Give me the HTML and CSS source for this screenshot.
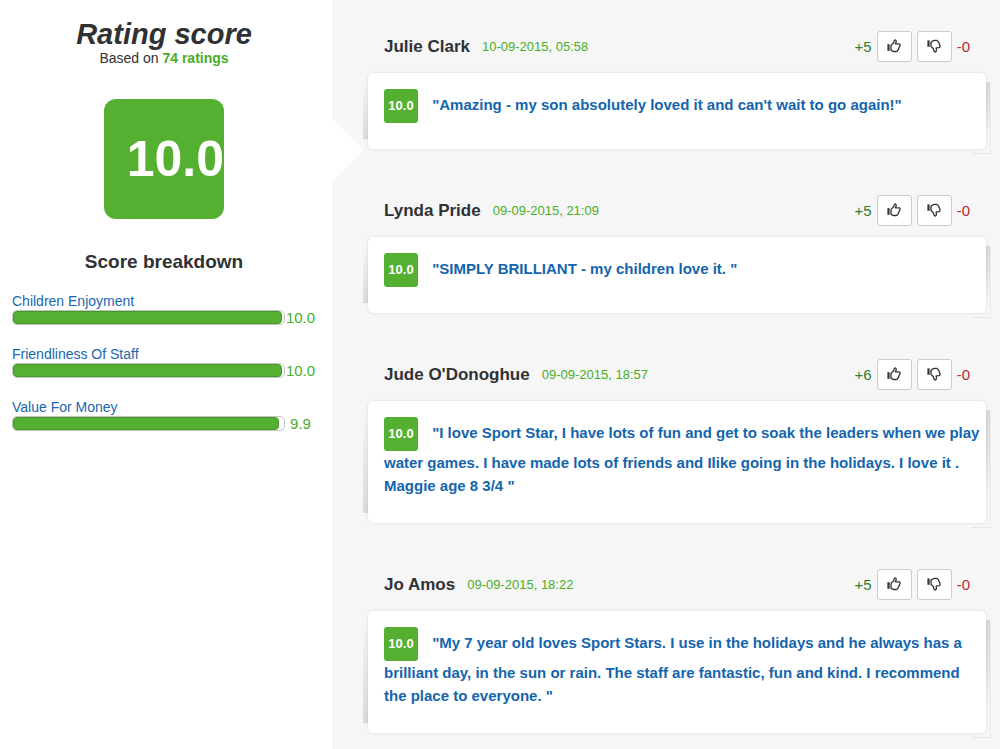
FILE: index.html
```html
<!DOCTYPE html>
<html lang="en">
<head>
    <meta charset="UTF-8">
    <meta name="viewport" content="width=device-width, initial-scale=1.0">
    <title>Rating score</title>
    <link rel="stylesheet" href="styles.css">
</head>

<body>
    <svg class="sprite" aria-hidden="true">
        <symbol id="thumb-up" viewBox="0 0 14 14">
            <path d="M0.4 5.2h2.2v6.6H0.4z" fill="currentColor"/>
            <path d="M4 6.4 6.6 3.8 7.4 1.4Q8 0.6 8.8 1.2 9.4 1.8 9.1 3L8.4 4.8H12.2Q13.4 5 13 6.3L12.2 8.6 11.2 10.8Q10.6 12.5 9.4 12.5H6.6Q5.4 12.4 4 11z" fill="none" stroke="currentColor" stroke-width="1.3" stroke-linejoin="round"/>
        </symbol>
        <symbol id="thumb-down" viewBox="0 0 14 14">
            <path d="M0.4 1.4h2.2v6.4H0.4z" fill="currentColor"/>
            <path d="M4 3.2Q6 1.3 7.6 1.3H9.6Q10.8 1.5 11.5 3L12.9 6.2Q13.4 8.4 12 8.6L9.2 8.8 9.4 11.2Q9.4 12.9 8.2 13 7.2 13 7 11.8L6.2 9.4 4 7.6z" fill="none" stroke="currentColor" stroke-width="1.3" stroke-linejoin="round"/>
        </symbol>
    </svg>

    <div class="rating-page">
        <aside class="summary">
            <h1>Rating score</h1>
            <p class="based-on">Based on <strong>74 ratings</strong></p>
            <div class="total-score">10.0</div>
            <h2>Score breakdown</h2>
            <div class="breakdown">
                <div class="breakdown-item">
                    <div class="breakdown-label">Children Enjoyment</div>
                    <div class="breakdown-row">
                        <div class="bar"><div class="bar-fill" style="width: 100%"></div></div>
                        <span class="breakdown-value">10.0</span>
                    </div>
                </div>
                <div class="breakdown-item">
                    <div class="breakdown-label">Friendliness Of Staff</div>
                    <div class="breakdown-row">
                        <div class="bar"><div class="bar-fill" style="width: 100%"></div></div>
                        <span class="breakdown-value">10.0</span>
                    </div>
                </div>
                <div class="breakdown-item">
                    <div class="breakdown-label">Value For Money</div>
                    <div class="breakdown-row">
                        <div class="bar"><div class="bar-fill" style="width: 99%"></div></div>
                        <span class="breakdown-value">9.9</span>
                    </div>
                </div>
            </div>
        </aside>

        <main class="reviews">
            <article class="review">
                <header class="review-header">
                    <h3>Julie Clark</h3>
                    <time class="review-date">10-09-2015, 05:58</time>
                    <div class="votes">
                        <span class="vote-plus">+5</span>
                        <button type="button" aria-label="Thumbs up"><svg><use href="#thumb-up"/></svg></button>
                        <button type="button" aria-label="Thumbs down"><svg><use href="#thumb-down"/></svg></button>
                        <span class="vote-minus">-0</span>
                    </div>
                </header>
                <div class="review-card">
                    <p><span class="score">10.0</span> "Amazing - my son absolutely loved it and can't wait to go again!"</p>
                </div>
            </article>

            <article class="review">
                <header class="review-header">
                    <h3>Lynda Pride</h3>
                    <time class="review-date">09-09-2015, 21:09</time>
                    <div class="votes">
                        <span class="vote-plus">+5</span>
                        <button type="button" aria-label="Thumbs up"><svg><use href="#thumb-up"/></svg></button>
                        <button type="button" aria-label="Thumbs down"><svg><use href="#thumb-down"/></svg></button>
                        <span class="vote-minus">-0</span>
                    </div>
                </header>
                <div class="review-card">
                    <p><span class="score">10.0</span> "SIMPLY BRILLIANT - my children love it. "</p>
                </div>
            </article>

            <article class="review">
                <header class="review-header">
                    <h3>Jude O'Donoghue</h3>
                    <time class="review-date">09-09-2015, 18:57</time>
                    <div class="votes">
                        <span class="vote-plus">+6</span>
                        <button type="button" aria-label="Thumbs up"><svg><use href="#thumb-up"/></svg></button>
                        <button type="button" aria-label="Thumbs down"><svg><use href="#thumb-down"/></svg></button>
                        <span class="vote-minus">-0</span>
                    </div>
                </header>
                <div class="review-card">
                    <p><span class="score">10.0</span> "I love Sport Star, I have lots of fun and get to soak the leaders when we play water games. I have made lots of friends and Ilike going in the holidays. I love it . Maggie age 8 3/4 "</p>
                </div>
            </article>

            <article class="review">
                <header class="review-header">
                    <h3>Jo Amos</h3>
                    <time class="review-date">09-09-2015, 18:22</time>
                    <div class="votes">
                        <span class="vote-plus">+5</span>
                        <button type="button" aria-label="Thumbs up"><svg><use href="#thumb-up"/></svg></button>
                        <button type="button" aria-label="Thumbs down"><svg><use href="#thumb-down"/></svg></button>
                        <span class="vote-minus">-0</span>
                    </div>
                </header>
                <div class="review-card">
                    <p><span class="score">10.0</span> "My 7 year old loves Sport Stars. I use in the holidays and he always has a brilliant day, in the sun or rain. The staff are fantastic, fun and kind. I recommend the place to everyone. "</p>
                </div>
            </article>
        </main>
    </div>
</body>
</html>
```
FILE: styles.css
```css
* {
    box-sizing: border-box;
}

body {
    margin: 0;
    background-color: #fff;
    color: #2f3234;
    font-family: Helvetica, "Liberation Sans", Arial, sans-serif;
    font-size: 15px;
}

h1, h2, h3, p {
    margin: 0;
}

.sprite {
    display: none;
}

.rating-page {
    display: flex;
    min-height: 100vh;
}

/* left column */
.summary {
    position: relative;
    flex: 0 0 332px;
    padding: 18px 16px 18px 12px;
}

/* arrow pointing at the first review */
.summary::after {
    content: "";
    position: absolute;
    top: 118px;
    left: 100%;
    border: 32px solid transparent;
    border-left-color: #fff;
    border-right-width: 0;
}

.summary h1 {
    font-size: 29px;
    line-height: 32px;
    font-style: italic;
    text-align: center;
}

.based-on {
    font-size: 14px;
    line-height: 16px;
    text-align: center;
}

.based-on strong {
    color: #48ae28;
}

.total-score {
    width: 120px;
    height: 120px;
    margin: 33px auto 32px;
    border-radius: 12px;
    background-color: #55af31;
    color: #fff;
    font-size: 50px;
    font-weight: bold;
    line-height: 120px;
    text-align: right;
}

.summary h2 {
    font-size: 19px;
    line-height: 22px;
    text-align: center;
}

.breakdown {
    display: grid;
    gap: 20px;
    margin-top: 20px;
}

.breakdown-label {
    color: #1a67ae;
    font-size: 14px;
    line-height: 16px;
}

.breakdown-row {
    display: flex;
    align-items: center;
    height: 17px;
}

.bar {
    flex: 1;
    height: 15px;
    padding-right: 2px;
    border: 1px solid #c4c4c4;
    border-radius: 5px;
}

.bar-fill {
    height: 13px;
    border: 1px solid #479a29;
    border-radius: 4px;
    background-color: #55af31;
}

.breakdown-value {
    width: 31px;
    color: #48ae28;
    text-align: center;
}

/* right column */
.reviews {
    flex: 1;
    display: flex;
    flex-direction: column;
    gap: 46px;
    padding: 31px 14px 16px 36px;
    background-color: #f6f6f6;
}

.review {
    isolation: isolate;
}

.review-header {
    display: flex;
    align-items: center;
    margin-bottom: 11px;
    padding: 0 16px;
}

.review-header h3 {
    font-size: 17px;
    line-height: 31px;
}

.review-date {
    margin-left: 12px;
    color: #48ae28;
    font-size: 13px;
}

.votes {
    display: flex;
    align-items: center;
    gap: 5px;
    margin-left: auto;
}

.vote-plus {
    color: #2e7d32;
}

.vote-minus {
    color: #b52b2b;
}

.votes button {
    display: flex;
    align-items: center;
    justify-content: center;
    width: 35px;
    height: 31px;
    padding: 0 0 2px;
    border: 1px solid #ccc;
    border-radius: 3px;
    background-color: #fff;
    color: #2f3234;
    cursor: pointer;
}

.votes button:hover {
    background-color: #ebebeb;
}

.votes svg {
    width: 14px;
    height: 14px;
}

.review-card {
    position: relative;
    padding: 16px 4px 26px 16px;
    border-radius: 5px;
    background-color: #fff;
    box-shadow: 0 0 3px rgba(0, 0, 0, 0.12);
}

/* side shadows, drawn behind the card */
.review-card::before,
.review-card::after {
    content: "";
    position: absolute;
    z-index: -1;
    width: 18px;
}

.review-card::before {
    top: 9px;
    bottom: 10px;
    left: -5px;
    background: linear-gradient(#f6f6f6, #dadada);
}

.review-card::after {
    top: 9px;
    bottom: -5px;
    right: -5px;
    border-right: 1px solid #ececec;
    border-bottom: 1px solid #e6e6e6;
    background: linear-gradient(#d9d9d9, #e2e2e2 35%, #f6f6f6 75%);
}

.review-card p {
    color: #1465ad;
    font-weight: bold;
    line-height: 23px;
}

.score {
    display: inline-block;
    width: 34px;
    height: 34px;
    margin-right: 10px;
    border-radius: 3px;
    background-color: #55af31;
    color: #fff;
    font-size: 13px;
    line-height: 34px;
    text-align: center;
}
```
